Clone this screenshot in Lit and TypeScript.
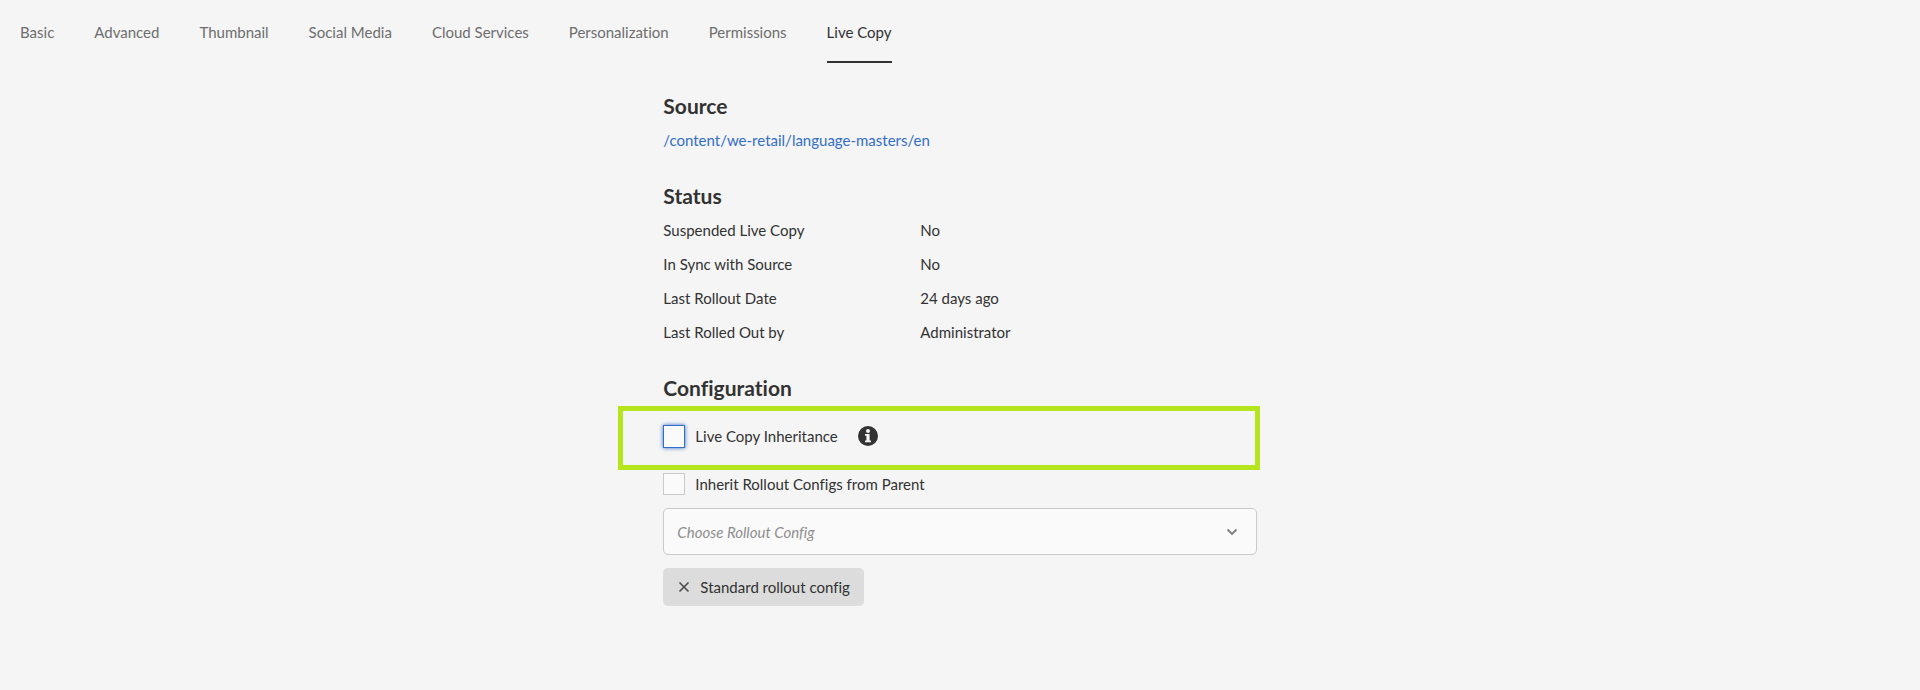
import { LitElement, html, css } from "lit";
import { customElement, state } from "lit/decorators.js";

const TABS = [
  "Basic",
  "Advanced",
  "Thumbnail",
  "Social Media",
  "Cloud Services",
  "Personalization",
  "Permissions",
  "Live Copy",
];

const STATUS: [string, string][] = [
  ["Suspended Live Copy", "No"],
  ["In Sync with Source", "No"],
  ["Last Rollout Date", "24 days ago"],
  ["Last Rolled Out by", "Administrator"],
];

@customElement("app-root")
export class AppRoot extends LitElement {
  static styles = css`
    :host {
      display: block;
      min-height: 100vh;
      box-sizing: border-box;
      background: #f5f5f5;
      color: #323232;
      font: 15px/24px Lato, "Noto Sans", sans-serif;
      font-variant-ligatures: no-common-ligatures;
    }
    .tabs {
      display: flex;
      flex-wrap: wrap;
      gap: 0 40px;
      padding: 20px 20px 0;
    }
    .tab {
      appearance: none;
      margin: 0;
      padding: 0 0 17px;
      border: 0;
      border-bottom: 2px solid transparent;
      background: none;
      color: #6e6e6e;
      font: inherit;
      font-variant-ligatures: inherit;
      cursor: pointer;
    }
    .tab.selected {
      color: #323232;
      border-bottom-color: #323232;
    }
    .panel {
      width: 30.9%;
      min-width: 480px;
      margin: 0 auto;
      padding: 29px 0 40px;
    }
    .section + .section {
      margin-top: 30px;
    }
    h2 {
      margin: 0;
      font-size: 21px;
      line-height: 28px;
      font-weight: 700;
    }
    .source {
      display: inline-block;
      margin-top: 8px;
      color: #326ec8;
      text-decoration: none;
      vertical-align: top;
    }
    .status {
      display: grid;
      grid-template-columns: 257px 1fr;
      row-gap: 10px;
      margin: 8px 0 0;
    }
    .status dt,
    .status dd {
      margin: 0;
    }
    .highlight {
      margin: 4px -3px 2px -45px;
      padding: 13px 0 17px 40px;
      border: 5px solid #b5e61d;
    }
    .row {
      display: flex;
      align-items: center;
    }
    .check {
      display: flex;
      align-items: center;
      gap: 10px;
      cursor: pointer;
    }
    .box {
      appearance: none;
      box-sizing: border-box;
      flex: none;
      width: 22px;
      height: 22px;
      margin: 0;
      border: 1px solid #cacaca;
      background: #fafafa;
    }
    .box.focused {
      height: 23px;
      border-color: #326ec8;
      box-shadow: 0 0 4px #326ec8;
      outline: none;
    }
    .info {
      display: flex;
      margin: 0 0 0 20px;
      padding: 0;
      border: 0;
      background: none;
      color: #323232;
      cursor: pointer;
    }
    .picker {
      display: grid;
      align-items: center;
      margin-top: 12px;
    }
    .picker > * {
      grid-area: 1 / 1;
    }
    .select {
      appearance: none;
      box-sizing: border-box;
      width: 100%;
      height: 47px;
      margin: 0;
      padding: 0 40px 0 13px;
      border: 1px solid #cacaca;
      border-radius: 5px;
      background: #fafafa;
      color: #8e8e8e;
      font: inherit;
      font-style: italic;
      font-variant-ligatures: inherit;
    }
    .chevron {
      justify-self: end;
      margin-right: 19px;
      color: #7d7d7d;
      pointer-events: none;
    }
    .tag {
      display: inline-flex;
      align-items: center;
      gap: 10px;
      height: 38px;
      margin-top: 13px;
      padding: 0 14px 0 15px;
      border-radius: 5px;
      background: #dcdcdc;
    }
    .remove {
      display: flex;
      margin: 0;
      padding: 0;
      border: 0;
      background: none;
      color: #4b4b4b;
      cursor: pointer;
    }
  `;

  @state() private selected = "Live Copy";

  render() {
    return html`
      <div class="tabs" role="tablist">
        ${TABS.map(
          (name) => html`<button
            class="tab ${name === this.selected ? "selected" : ""}"
            role="tab"
            aria-selected=${name === this.selected ? "true" : "false"}
            @click=${() => (this.selected = name)}
          >${name}</button>`
        )}
      </div>
      <main class="panel">
        <section class="section">
          <h2>Source</h2>
          <a class="source" href="#">/content/we-retail/language-masters/en</a>
        </section>
        <section class="section">
          <h2>Status</h2>
          <dl class="status">
            ${STATUS.map(([name, value]) => html`<dt>${name}</dt><dd>${value}</dd>`)}
          </dl>
        </section>
        <section class="section">
          <h2>Configuration</h2>
          <div class="highlight row">
            <label class="check">
              <input class="box focused" type="checkbox" />
              Live Copy Inheritance
            </label>
            <button class="info" aria-label="More information">
              <svg width="20" height="20" viewBox="0 0 20 20" aria-hidden="true">
                <circle cx="10" cy="10" r="10" fill="currentColor" />
                <circle cx="10" cy="4.9" r="2" fill="#f5f5f5" />
                <path d="M7 8h4.6v6.4H13v1.8H7v-1.8h1.4V9.8H7z" fill="#f5f5f5" />
              </svg>
            </button>
          </div>
          <div class="row">
            <label class="check">
              <input class="box" type="checkbox" />
              Inherit Rollout Configs from Parent
            </label>
          </div>
          <div class="picker">
            <select class="select" aria-label="Rollout config">
              <option>Choose Rollout Config</option>
            </select>
            <svg class="chevron" width="12" height="8" viewBox="0 0 12 8" aria-hidden="true">
              <path d="M1.5 1.5 6 6l4.5-4.5" fill="none" stroke="currentColor" stroke-width="1.8" />
            </svg>
          </div>
          <div class="tag">
            <button class="remove" aria-label="Remove">
              <svg width="12" height="12" viewBox="0 0 12 12" aria-hidden="true">
                <path d="m1.5 1.5 9 9m0-9-9 9" stroke="currentColor" stroke-width="1.6" />
              </svg>
            </button>
            <span>Standard rollout config</span>
          </div>
        </section>
      </main>
    `;
  }
}
